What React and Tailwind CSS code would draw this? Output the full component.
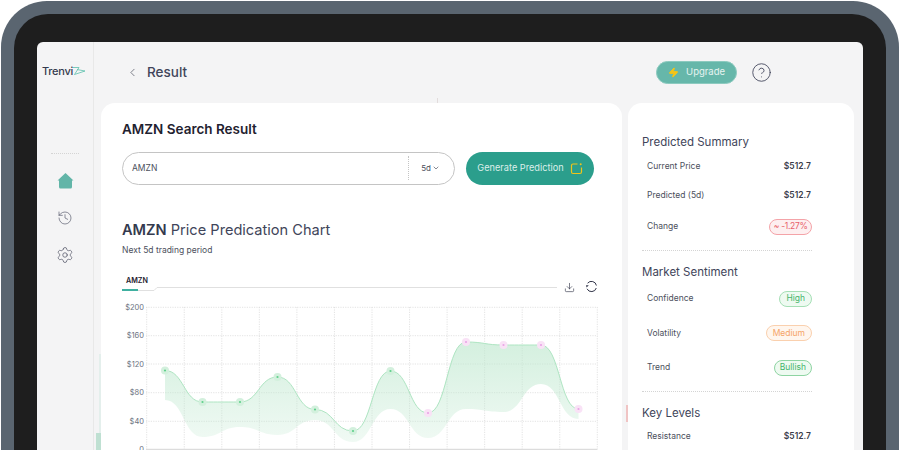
import { ChevronLeft, ChevronDown, Zap, CircleHelp, History, Settings, Download } from 'lucide-react'

const top = [[165, 370.5], [202.5, 402], [240, 402], [277.5, 377], [315, 409.5], [353, 431], [390.5, 371], [428, 413], [466, 342], [503.5, 345], [541, 345], [578.5, 409]]
const bottom = [[165, 400], [202.5, 437], [240, 427], [277.5, 435], [315, 420], [353, 442], [390.5, 409], [428, 438], [466, 409], [503.5, 412], [541, 384], [578.5, 419]]

// horizontal tangents at every point, same look as the chart lib
function smooth(pts) {
    let d = ''
    for (let i = 1; i < pts.length; i++) {
        const [x0, y0] = pts[i - 1]
        const [x1, y1] = pts[i]
        const mid = (x0 + x1) / 2
        d += ` C${mid} ${y0} ${mid} ${y1} ${x1} ${y1}`
    }
    return d
}

function areaPath() {
    const rev = [...bottom].reverse()
    return `M${top[0][0]} ${top[0][1]}${smooth(top)} L${rev[0][0]} ${rev[0][1]}${smooth(rev)} Z`
}

function Chart() {
    const xs = Array.from({ length: 13 }, (_, i) => 146.7 + i * 37.55)
    const ys = [307.3, 335.7, 364, 392.7, 421.3]
    const labels = ['$200', '$160', '$120', '$80', '$40', '0']
    return (
        <svg width="521" height="159" viewBox="101 291 521 159" className="block ml-[-21px]">
            <defs>
                <linearGradient id="fill" x1="0" y1="340" x2="0" y2="445" gradientUnits="userSpaceOnUse">
                    <stop offset="0" stopColor="#bfe8cf" stopOpacity="0.68" />
                    <stop offset="1" stopColor="#bfe8cf" stopOpacity="0.22" />
                </linearGradient>
            </defs>
            {xs.map((x) => <line key={x} x1={x} x2={x} y1="307" y2="449" stroke="#dcdcdc" strokeWidth="0.8" strokeDasharray="1.2 1.2" />)}
            {ys.map((y) => <line key={y} x1="146" x2="597.5" y1={y} y2={y} stroke="#dcdcdc" strokeWidth="0.8" strokeDasharray="1.2 1.2" />)}
            <line x1="146" x2="597.5" y1="449.3" y2="449.3" stroke="#d4d4d4" strokeWidth="1" />
            {labels.map((l, i) => (
                <text key={l} x="144" y={[307.3, 335.7, 364, 392.7, 421.3, 449][i] + 2.5} textAnchor="end" fontSize="7.5" fill="#6b7280" fontFamily="Inter, sans-serif">{l}</text>
            ))}
            <path d={areaPath()} fill="url(#fill)" />
            <path d={`M${top[0][0]} ${top[0][1]}${smooth(top)}`} fill="none" stroke="#aee5c2" strokeWidth="1" />
            {top.map(([x, y], i) => {
                const pink = i >= 7
                return (
                    <g key={x}>
                        <circle cx={x} cy={y} r="4" fill={pink ? '#f9e2f6' : '#d3f0dd'} />
                        <circle cx={x} cy={y} r="1.1" fill={pink ? '#e9a6e6' : '#5fd18b'} />
                    </g>
                )
            })}
        </svg>
    )
}

function Row({ label, children, className }) {
    return (
        <div className={`flex items-center justify-between pl-[5px] ${className}`}>
            <span className="text-[8.5px] text-[#4b4f5c]">{label}</span>
            {children}
        </div>
    )
}

function Price() {
    return <span className="pr-[1px] text-[8.5px] font-semibold text-[#3a3d4a]">$512.7</span>
}

function Pill({ className, children }) {
    return <span className={`h-[16px] flex items-center rounded-full border text-[8.5px] ${className}`}>{children}</span>
}

export default function App() {
    return (
        <div className="w-[900px] h-[450px] overflow-hidden bg-white font-['Inter',sans-serif]">
            <div className="w-[898px] h-[500px] ml-px mt-px rounded-t-[46px] bg-[#5a6570] pt-[13px] px-[13px]">
                <div className="h-[500px] rounded-t-[34px] bg-[#1e1e1e] pt-[28px] px-[23px]">
                    <div className="h-[500px] flex rounded-t-[6px] bg-[#f4f4f5] overflow-hidden">
                        <aside className="w-[57px] shrink-0 border-r border-[#e8e8e8] flex flex-col items-center">
                            <div className="mt-[22px] ml-[-2px] flex items-center h-[14px]">
                                <span className="text-[11px] font-medium tracking-[-0.3px] text-[#343a4e]">Trenvi</span>
                                <svg width="14" height="10" viewBox="0 0 14 10" fill="none" stroke="#5cc0ad" strokeWidth="0.8" className="ml-[-1px]">
                                    <path d="M1 1.5H7L2.5 8.5L13 5L5 3.5" />
                                </svg>
                            </div>
                            <div className="w-[28px] mt-[75px] border-t border-dotted border-[#d4d4d4]" />
                            <svg width="17" height="17" viewBox="0 0 17 17" className="mt-[18px]">
                                <path d="M8.5 1L16.5 8.5H15V15a1.5 1.5 0 0 1-1.5 1.5h-10A1.5 1.5 0 0 1 2 15V8.5H.5Z" fill="#62b5a8" />
                            </svg>
                            <History size={16} strokeWidth={1} color="#55586a" className="mt-[20.5px]" />
                            <Settings size={18} strokeWidth={1} color="#55586a" className="mt-[20px]" />
                        </aside>
                        <main className="flex-1 min-w-0">
                            <header className="h-[61px] flex items-center pl-[32px]">
                                <ChevronLeft size={13} strokeWidth={1.3} color="#4b4f5c" />
                                <h1 className="ml-[8px] text-[13.5px] font-medium text-[#41455a]">Result</h1>
                                <button className="ml-[469px] w-[81px] h-[23px] rounded-full bg-[#66b7aa] border border-[#8ccabf] flex items-center justify-center gap-[7px] text-[9.5px] text-[#e6f4f1]">
                                    <Zap size={11} fill="#f5c518" stroke="#f5c518" />
                                    Upgrade
                                </button>
                                <CircleHelp size={21} strokeWidth={1} color="#41455a" className="ml-[14px]" />
                            </header>
                            <div className="flex items-start">
                                <div className="w-[7px] h-[400px] shrink-0 flex flex-col items-end pt-[251px]">
                                    <div className="w-[2px] h-[79px] bg-[#e4efec]" />
                                    <div className="w-[5px] h-[70px] bg-[#bfe0d2]" />
                                </div>
                                <section className="relative w-[521px] h-[400px] rounded-t-[14px] bg-white pl-[21px] pt-[18px] shrink-0">
                                    <div className="absolute -top-[5px] left-[336px] w-px h-[5px] bg-[#e2dcdc]" />
                                    <h2 className="text-[13.5px] leading-[16px] font-semibold text-[#1f2230]">AMZN Search Result</h2>
                                    <div className="mt-[14.5px] flex gap-[11px]">
                                        <div className="w-[333px] h-[33px] rounded-full border border-[#c4c4c4] flex items-center pl-[9px] pr-[14px]">
                                            <span className="flex-1 text-[8.5px] text-[#4b4f5c]">AMZN</span>
                                            <div className="h-[24px] border-l border-dotted border-[#c4c4c4] pl-[12px] flex items-center gap-[1px] text-[8px] text-[#4b4f5c]">
                                                5d
                                                <ChevronDown size={8} />
                                            </div>
                                        </div>
                                        <button className="w-[128px] h-[33px] rounded-full bg-[#2b9e8c] flex items-center justify-center gap-[6px] text-[9.2px] text-[#dcefea]">
                                            Generate Prediction
                                            <svg width="13" height="13" viewBox="0 0 13 13" fill="none" stroke="#f0c419" strokeWidth="1.2">
                                                <path d="M7.5 2H3A1.5 1.5 0 0 0 1.5 3.5V10A1.5 1.5 0 0 0 3 11.5H10A1.5 1.5 0 0 0 11.5 10V5.5" />
                                                <circle cx="10.7" cy="2.3" r="1" fill="#f0c419" stroke="none" />
                                            </svg>
                                        </button>
                                    </div>
                                    <h3 className="mt-[36px] text-[14.6px] leading-[18px] text-[#41455a]"><b className="font-semibold text-[#343a4e]">AMZN</b> Price Predication Chart</h3>
                                    <p className="mt-[5px] text-[8.5px] leading-[12px] text-[#4b4f5c]">Next 5d trading period</p>
                                    <div className="mt-[20.5px] w-[476px] h-[15px] flex items-end">
                                        <div className="w-[16px] shrink-0 border-b-2 border-[#3fb0a0] pb-[3px]">
                                            <span className="block pl-[4px] text-[7.2px] leading-[10px] font-semibold text-[#1f2230] whitespace-nowrap">AMZN</span>
                                        </div>
                                        <svg width="22" height="4" viewBox="0 0 22 4" fill="none" stroke="#e0e0e0" strokeWidth="1" className="shrink-0">
                                            <path d="M0 3.5H16L19 .5H22" />
                                        </svg>
                                        <div className="flex-1 mb-[3px] border-b border-[#e0e0e0]" />
                                        <Download size={11} strokeWidth={1.4} color="#33364a" className="ml-[7px] mb-[-1.5px]" />
                                        <svg width="13" height="13" viewBox="0 0 13 13" fill="none" stroke="#33364a" strokeWidth="1" className="ml-[10px] mb-[-1.5px]">
                                            <path d="M2.6 3.2A5 5 0 0 1 11.4 5.5" />
                                            <path d="M11.3 8A5 5 0 0 1 2 8.8" />
                                            <path d="M1 5.2H3.8L1.6 7.6Z" fill="#33364a" stroke="none" />
                                        </svg>
                                    </div>
                                    <Chart />
                                </section>
                                <div className="w-[6px] h-[400px] shrink-0 flex justify-end pt-[302px]">
                                    <div className="w-[2px] h-[17px] bg-[#f0c4c4]" />
                                </div>
                                <section className="w-[226px] h-[400px] shrink-0 rounded-t-[14px] bg-white pl-[14px] pr-[42px] pt-[32px]">
                                    <h4 className="text-[11.5px] leading-[14px] text-[#41455a]">Predicted Summary</h4>
                                    <Row label="Current Price" className="mt-[11px] h-[12px]"><Price /></Row>
                                    <Row label="Predicted (5d)" className="mt-[17.5px] h-[12px]"><Price /></Row>
                                    <Row label="Change" className="mt-[17px] h-[16px]">
                                        <Pill className="px-[3.5px] tracking-[-0.3px] border-[#f4a3a8] bg-[#fdeff0] text-[#e8606a]">~ -1.27%</Pill>
                                    </Row>
                                    <div className="mt-[15px] border-t border-dotted border-[#d4d4d4]" />
                                    <h4 className="mt-[14px] text-[11.5px] leading-[14px] text-[#41455a]">Market Sentiment</h4>
                                    <Row label="Confidence" className="mt-[12px] h-[16px]">
                                        <Pill className="px-[6px] border-[#a5dfb5] bg-[#eefaf1] text-[#46b56c]">High</Pill>
                                    </Row>
                                    <Row label="Volatility" className="mt-[18.5px] h-[16px]">
                                        <Pill className="px-[6px] border-[#fad0ae] bg-[#fff6ee] text-[#f5a468]">Medium</Pill>
                                    </Row>
                                    <Row label="Trend" className="mt-[18.5px] h-[16px]">
                                        <Pill className="px-[5px] border-[#8ed4a2] bg-[#eefaf1] text-[#46b56c]">Bullish</Pill>
                                    </Row>
                                    <div className="mt-[15px] border-t border-dotted border-[#d4d4d4]" />
                                    <h4 className="mt-[14px] text-[11.5px] leading-[14px] text-[#41455a]">Key Levels</h4>
                                    <Row label="Resistance" className="mt-[11px] h-[12px]"><Price /></Row>
                                </section>
                            </div>
                        </main>
                    </div>
                </div>
            </div>
        </div>
    )
}
